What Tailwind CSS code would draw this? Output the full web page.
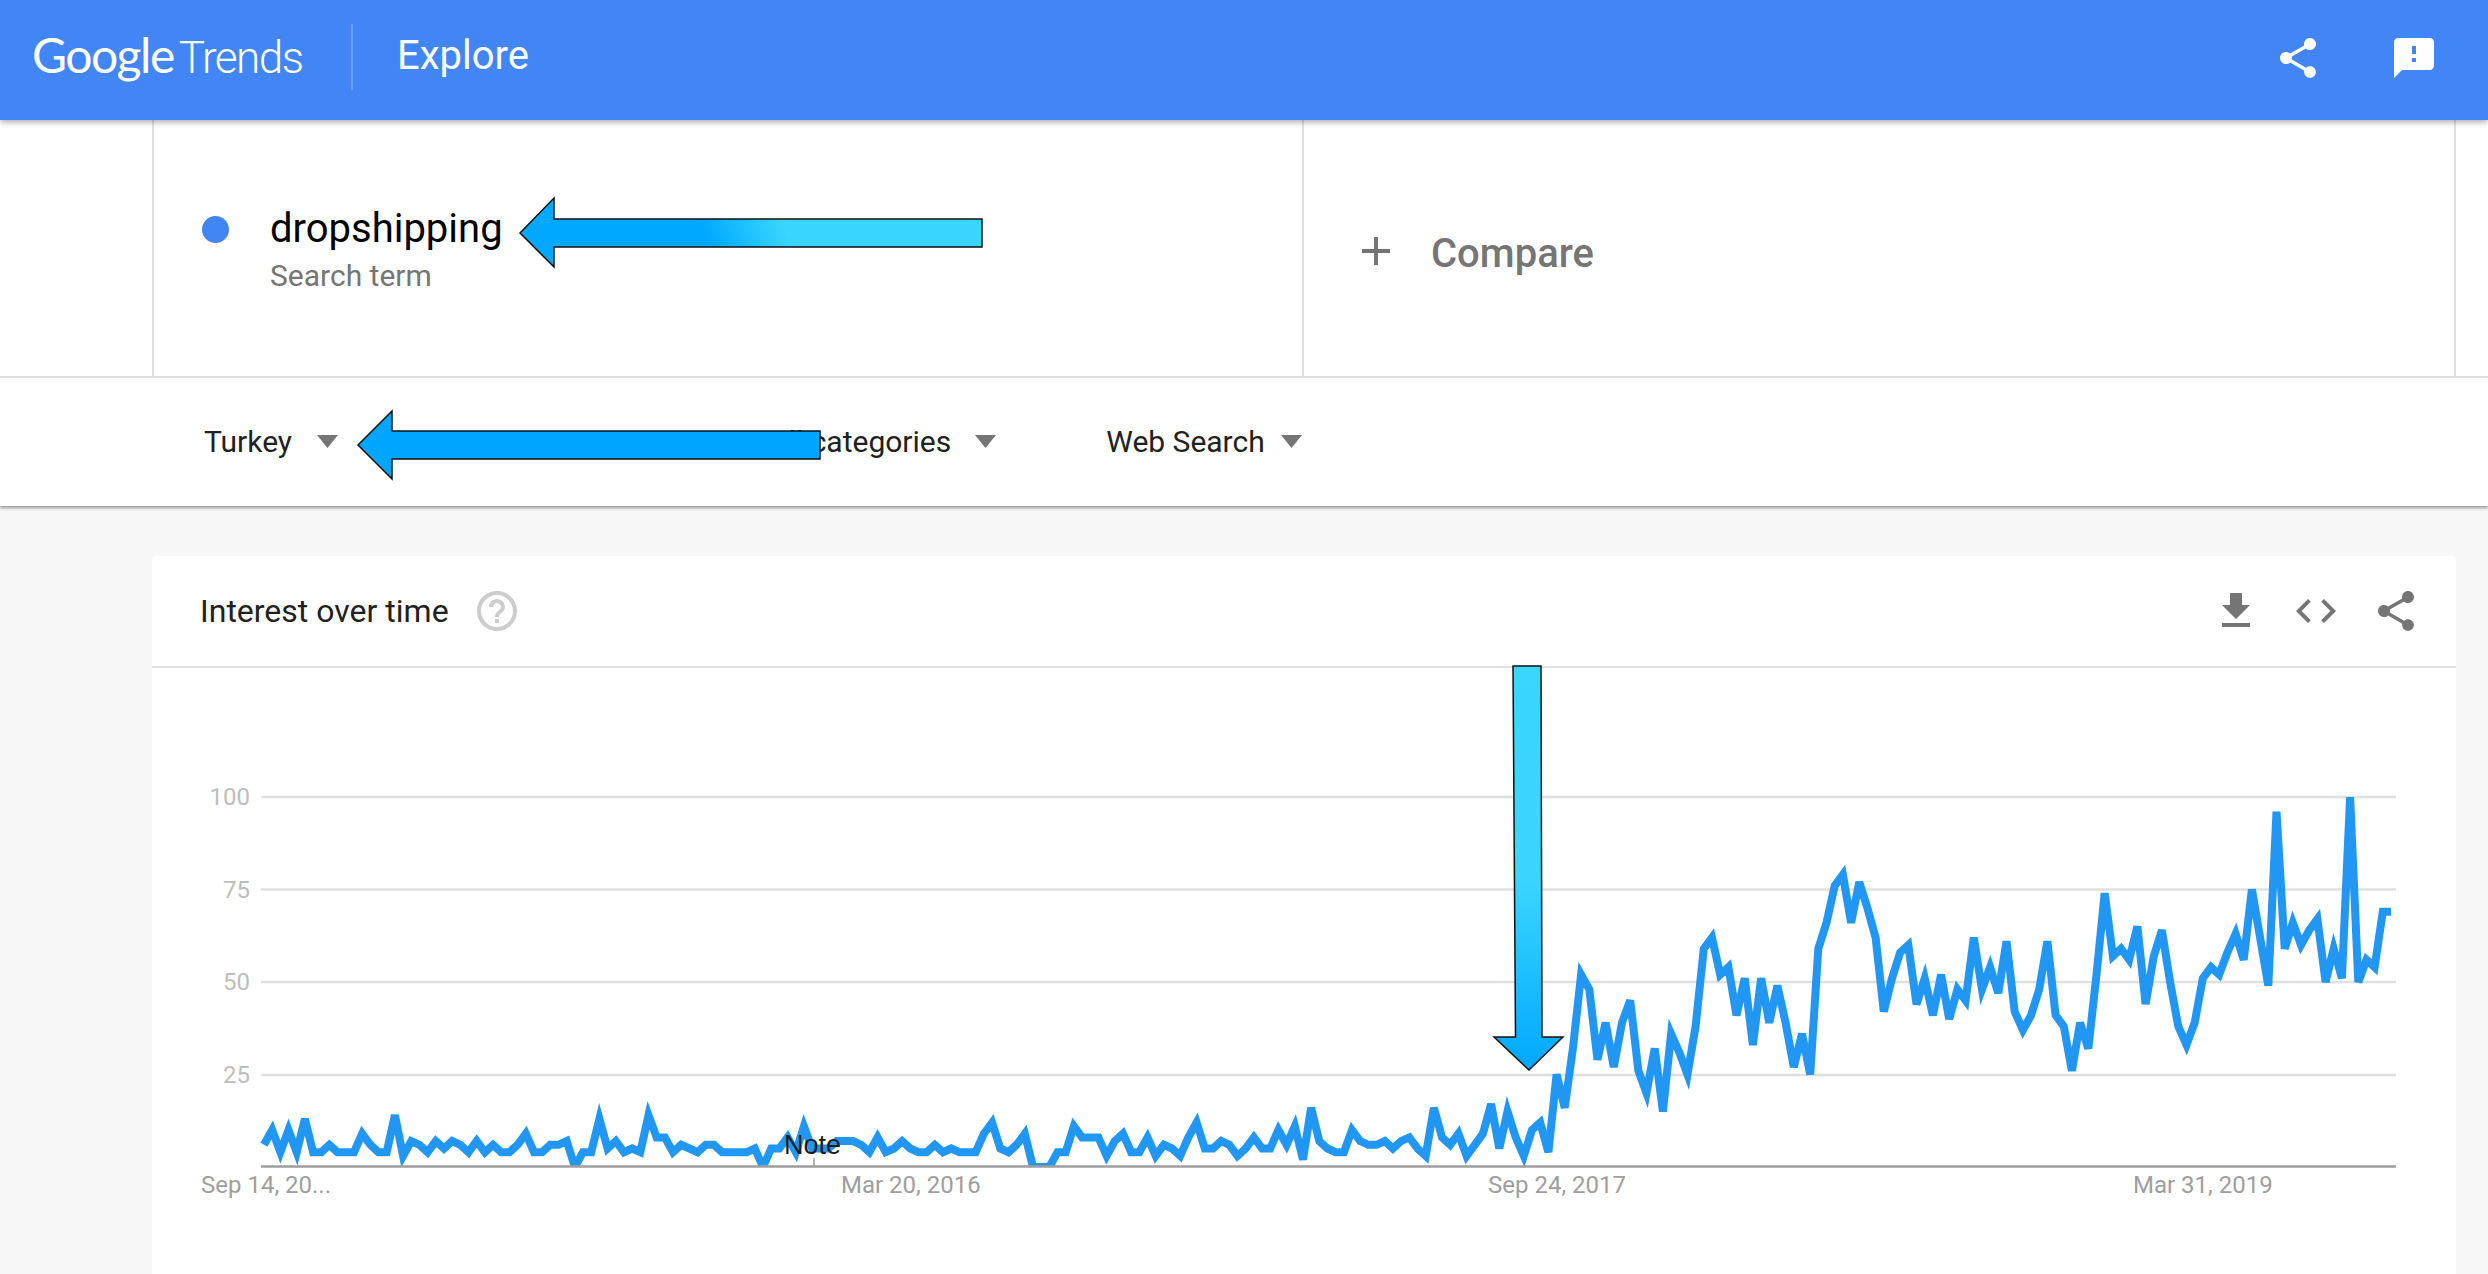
<!DOCTYPE html>
<html lang="en">

<head>
    <meta charset="UTF-8">
    <meta name="viewport" content="width=device-width, initial-scale=1.0">
    <title>Google Trends - Explore</title>
    <script src="https://cdn.jsdelivr.net/npm/@tailwindcss/browser@4"></script>
</head>

<body class="relative h-screen overflow-hidden bg-[#f7f7f7] font-['Roboto',sans-serif]">
    <header class="relative z-10 flex h-[120px] items-center justify-between bg-[#4285f4] pr-[50px] shadow-[0_2px_6px_rgba(0,0,0,0.35)]">
        <div class="flex h-full items-center">
            <div class="flex w-[351px] items-baseline gap-[5px] pl-[32px] pb-[10px] text-white">
                <span class="font-['Lato',sans-serif] text-[48px] tracking-[-1.5px]">Google</span>
                <span class="text-[44px] font-light tracking-[-1.5px]">Trends</span>
            </div>
            <div class="mb-[6px] h-[66px] w-[2px] bg-white/20"></div>
            <h1 class="ml-[44px] pb-[8px] text-[40px] text-white">Explore</h1>
        </div>
        <div class="flex items-center gap-[68px] pb-[4px] text-white">
            <svg class="size-12" viewBox="0 0 24 24" fill="currentColor">
                <path d="M18 16.08c-.76 0-1.44.3-1.96.77L8.91 12.7c.05-.23.09-.46.09-.7s-.04-.47-.09-.7l7.05-4.11c.54.5 1.25.81 2.04.81 1.66 0 3-1.34 3-3s-1.34-3-3-3-3 1.34-3 3c0 .24.04.47.09.7L8.04 9.81C7.5 9.31 6.79 9 6 9c-1.66 0-3 1.34-3 3s1.34 3 3 3c.79 0 1.5-.31 2.04-.81l7.12 4.16c-.05.21-.08.43-.08.65 0 1.61 1.31 2.92 2.92 2.92 1.61 0 2.92-1.31 2.92-2.92s-1.31-2.92-2.92-2.92z" />
            </svg>
            <svg class="size-12" viewBox="0 0 24 24" fill="currentColor">
                <path d="M20 2H4c-1.1 0-1.99.9-1.99 2L2 22l4-4h14c1.1 0 2-.9 2-2V4c0-1.1-.9-2-2-2zm-7 12h-2v-2h2v2zm0-4h-2V6h2v4z" />
            </svg>
        </div>
    </header>

    <section class="h-[258px] border-b-2 border-[#e0e0e0] bg-white pl-[152px] pr-[32px]">
        <div class="flex h-full border-x-2 border-[#e0e0e0]">
            <div class="flex h-full w-[1150px] border-r-2 border-[#e0e0e0] pl-[48px] pt-[80px]">
                <div class="mt-[16px] size-[27px] rounded-full bg-[#4285f4]"></div>
                <div class="ml-[41px]">
                    <div class="text-[40px] leading-[58px] text-black">dropshipping</div>
                    <div class="text-[30px] leading-[36px] text-[#757575]">Search term</div>
                </div>
            </div>
            <div class="flex items-center pl-[48px] pt-[6px]">
                <svg class="size-12 text-[#757575]" viewBox="0 0 24 24" fill="currentColor">
                    <path d="M19 13h-6v6h-2v-6H5v-2h6V5h2v6h6v2z" />
                </svg>
                <span class="ml-[31px] mt-[6px] text-[40px] font-medium text-[#757575]">Compare</span>
            </div>
        </div>
    </section>

    <nav class="relative flex h-[128px] items-center bg-white pb-[1px] pl-[204px] text-[30px] text-[#212121] shadow-[0_2px_3px_rgba(0,0,0,0.4)]">
        <div class="flex items-center gap-[25px]">
            <span>Turkey</span>
            <svg class="h-[13px] w-[21px] text-[#757575]" viewBox="0 0 21 13" fill="currentColor"><path d="M0 0h21L10.5 13z" /></svg>
        </div>
        <div class="ml-[113px] flex items-center gap-[25px]">
            <span>Past 5 years</span>
            <svg class="h-[13px] w-[21px] text-[#757575]" viewBox="0 0 21 13" fill="currentColor"><path d="M0 0h21L10.5 13z" /></svg>
        </div>
        <div class="ml-[108px] flex items-center gap-[24px]">
            <span>All categories</span>
            <svg class="h-[13px] w-[21px] text-[#757575]" viewBox="0 0 21 13" fill="currentColor"><path d="M0 0h21L10.5 13z" /></svg>
        </div>
        <div class="ml-[110px] flex items-center gap-[16px]">
            <span>Web Search</span>
            <svg class="h-[13px] w-[21px] text-[#757575]" viewBox="0 0 21 13" fill="currentColor"><path d="M0 0h21L10.5 13z" /></svg>
        </div>
    </nav>

    <main class="ml-[152px] mr-[32px] mt-[50px] h-[718px] rounded-t-[3px] bg-white">
        <div class="flex h-[112px] items-center justify-between border-b-2 border-[#e0e0e0] pl-[48px] pr-[36px]">
            <div class="flex items-center gap-[24px]">
                <h2 class="text-[32px] text-[#212121]">Interest over time</h2>
                <svg class="size-12 text-[#cccccc]" viewBox="0 0 24 24" fill="currentColor">
                    <path d="M11 18h2v-2h-2v2zm1-16C6.48 2 2 6.48 2 12s4.48 10 10 10 10-4.48 10-10S17.52 2 12 2zm0 18c-4.41 0-8-3.59-8-8s3.59-8 8-8 8 3.59 8 8-3.59 8-8 8zm0-14c-2.21 0-4 1.79-4 4h2c0-1.1.9-2 2-2s2 .9 2 2c0 2-3 1.75-3 5h2c0-2.25 3-2.5 3-5 0-2.21-1.79-4-4-4z" />
                </svg>
            </div>
            <div class="flex items-center gap-[32px] text-[#757575]">
                <svg class="size-12" viewBox="0 0 24 24" fill="currentColor"><path d="M19 9h-4V3H9v6H5l7 7 7-7zM5 18v2h14v-2H5z" /></svg>
                <svg class="size-12" viewBox="0 0 24 24" fill="currentColor"><path d="M9.4 16.6L4.8 12l4.6-4.6L8 6l-6 6 6 6 1.4-1.4zm5.2 0l4.6-4.6-4.6-4.6L16 6l6 6-6 6-1.4-1.4z" /></svg>
                <svg class="size-12" viewBox="0 0 24 24" fill="currentColor"><path d="M18 16.08c-.76 0-1.44.3-1.96.77L8.91 12.7c.05-.23.09-.46.09-.7s-.04-.47-.09-.7l7.05-4.11c.54.5 1.25.81 2.04.81 1.66 0 3-1.34 3-3s-1.34-3-3-3-3 1.34-3 3c0 .24.04.47.09.7L8.04 9.81C7.5 9.31 6.79 9 6 9c-1.66 0-3 1.34-3 3s1.34 3 3 3c.79 0 1.5-.31 2.04-.81l7.12 4.16c-.05.21-.08.43-.08.65 0 1.61 1.31 2.92 2.92 2.92 1.61 0 2.92-1.31 2.92-2.92s-1.31-2.92-2.92-2.92z" /></svg>
            </div>
        </div>

        <!-- chart, viewBox uses page coords so numbers match the grid -->
        <svg class="block w-full" height="500" viewBox="152 668 2304 500" fill="none">
            <g stroke="#e0e0e0" stroke-width="2.5">
                <line x1="261" x2="2396" y1="797" y2="797" />
                <line x1="261" x2="2396" y1="889.5" y2="889.5" />
                <line x1="261" x2="2396" y1="982" y2="982" />
                <line x1="261" x2="2396" y1="1075" y2="1075" />
            </g>
            <g fill="#bdbdbd" font-size="24" text-anchor="end">
                <text x="250" y="805">100</text>
                <text x="250" y="898">75</text>
                <text x="250" y="990">50</text>
                <text x="250" y="1083">25</text>
            </g>
            <svg x="152" y="797" width="2304" height="370" viewBox="152 797 2304 370">
                <polyline id="line" stroke="#2196f3" stroke-width="8" stroke-linejoin="miter" stroke-miterlimit="4" />
            </svg>
            <line x1="261" x2="2396" y1="1166.5" y2="1166.5" stroke="#9e9e9e" stroke-width="2.5" />
            <line x1="814" x2="814" y1="1158" y2="1166" stroke="#9e9e9e" stroke-width="1.5" />
        </svg>
        <div class="relative h-[60px] text-[24px] text-[#9e9e9e]">
            <span class="absolute left-[49px] top-[-1px]">Sep 14, 20...</span>
            <span class="absolute left-[689px] top-[-1px]">Mar 20, 2016</span>
            <span class="absolute left-[1336px] top-[-1px]">Sep 24, 2017</span>
            <span class="absolute left-[1981px] top-[-1px]">Mar 31, 2019</span>
        </div>
    </main>

    <!-- pasted-on annotations -->
    <span class="absolute left-[784px] top-[1125px] font-['Liberation_Sans',sans-serif] text-[27px] text-[#1a1a1a]">Note</span>
    <svg class="absolute left-0 top-0" width="2488" height="1274" viewBox="0 0 2488 1274">
        <defs>
            <linearGradient id="arrowA" gradientUnits="userSpaceOnUse" x1="705" y1="235" x2="775" y2="205">
                <stop offset="0" stop-color="#00a8ff" />
                <stop offset="1" stop-color="#3ad6ff" />
            </linearGradient>
            <linearGradient id="arrowC" gradientUnits="userSpaceOnUse" x1="1529" y1="1070" x2="1529" y2="880">
                <stop offset="0" stop-color="#00a8ff" />
                <stop offset="1" stop-color="#3ad6ff" />
            </linearGradient>
        </defs>
        <path d="M520 233L554 198V219H982V247H554V267z" fill="url(#arrowA)" stroke="#111" stroke-width="1.5" />
        <path d="M358 445L392 411V431H820V459H392V479z" fill="#00a5ff" stroke="#111" stroke-width="1.5" />
        <path d="M1513 666H1541L1542 1037H1563L1529 1070L1494 1037H1515.5z" fill="url(#arrowC)" stroke="#111" stroke-width="1.5" />
    </svg>

    <script>
        const values = [
            6, 10, 4, 10, 4, 13, 4, 4, 6, 4, 4, 4, 9, 6, 4, 4, 14, 3, 7, 6, 4, 7, 5, 7, 6, 4, 7, 4, 6, 4, 4, 6, 9, 4, 4, 6, 6, 7, 0, 4, 4, 13, 5, 7, 4, 5, 4, 14, 8, 8, 4, 6, 5, 4, 6, 6, 4, 4, 4, 4, 5, 0, 5, 5, 8, 4, 11, 5, 5, 5, 7, 7, 7, 6, 4, 8, 4, 5, 7, 5, 4, 4, 6, 4, 5, 4, 4, 4,
            9, 12, 5, 4, 6, 9, 0, 0, 0, 4, 4, 11, 8, 8, 8, 3, 7, 9, 4, 4, 8, 3, 6, 5, 3, 8, 12, 5, 5, 7, 6, 3, 5, 8, 5, 5, 10, 6, 11, 2, 16, 7, 5, 4, 4, 10, 7, 6, 6, 7, 5, 7, 8, 5, 3, 16, 8, 6, 9, 3, 6, 9, 17, 5, 15, 8, 3, 10, 12, 4,
            25, 16, 32, 52, 48, 29, 39, 27, 39, 45, 26, 20, 32, 15, 36, 31, 25, 38, 59, 62,
            52, 54, 41, 51, 33, 51, 39, 49, 39, 27, 36, 25, 59, 66, 76, 79, 66, 77, 70, 62, 42, 51, 58, 60, 44, 51, 41, 52, 40, 48, 45, 62, 48, 54, 47, 61, 42, 37, 41, 48, 61, 41, 38, 26, 39, 32, 52, 74, 57, 59, 56, 65, 44, 57, 64, 50, 38, 33, 39, 51, 54, 52, 58, 63, 56, 75, 62, 49, 96, 59, 66, 60, 64, 67, 50, 59, 51, 100, 50, 56, 54, 69, 69
        ]

        const startX = 264
        const stepX = (2391 - startX) / (values.length - 1)
        const points = values.map((v, i) => `${(startX + i * stepX).toFixed(1)},${(1167 - v * 3.7).toFixed(1)}`)
        document.querySelector("#line").setAttribute("points", points.join(" "))
    </script>
</body>

</html>
